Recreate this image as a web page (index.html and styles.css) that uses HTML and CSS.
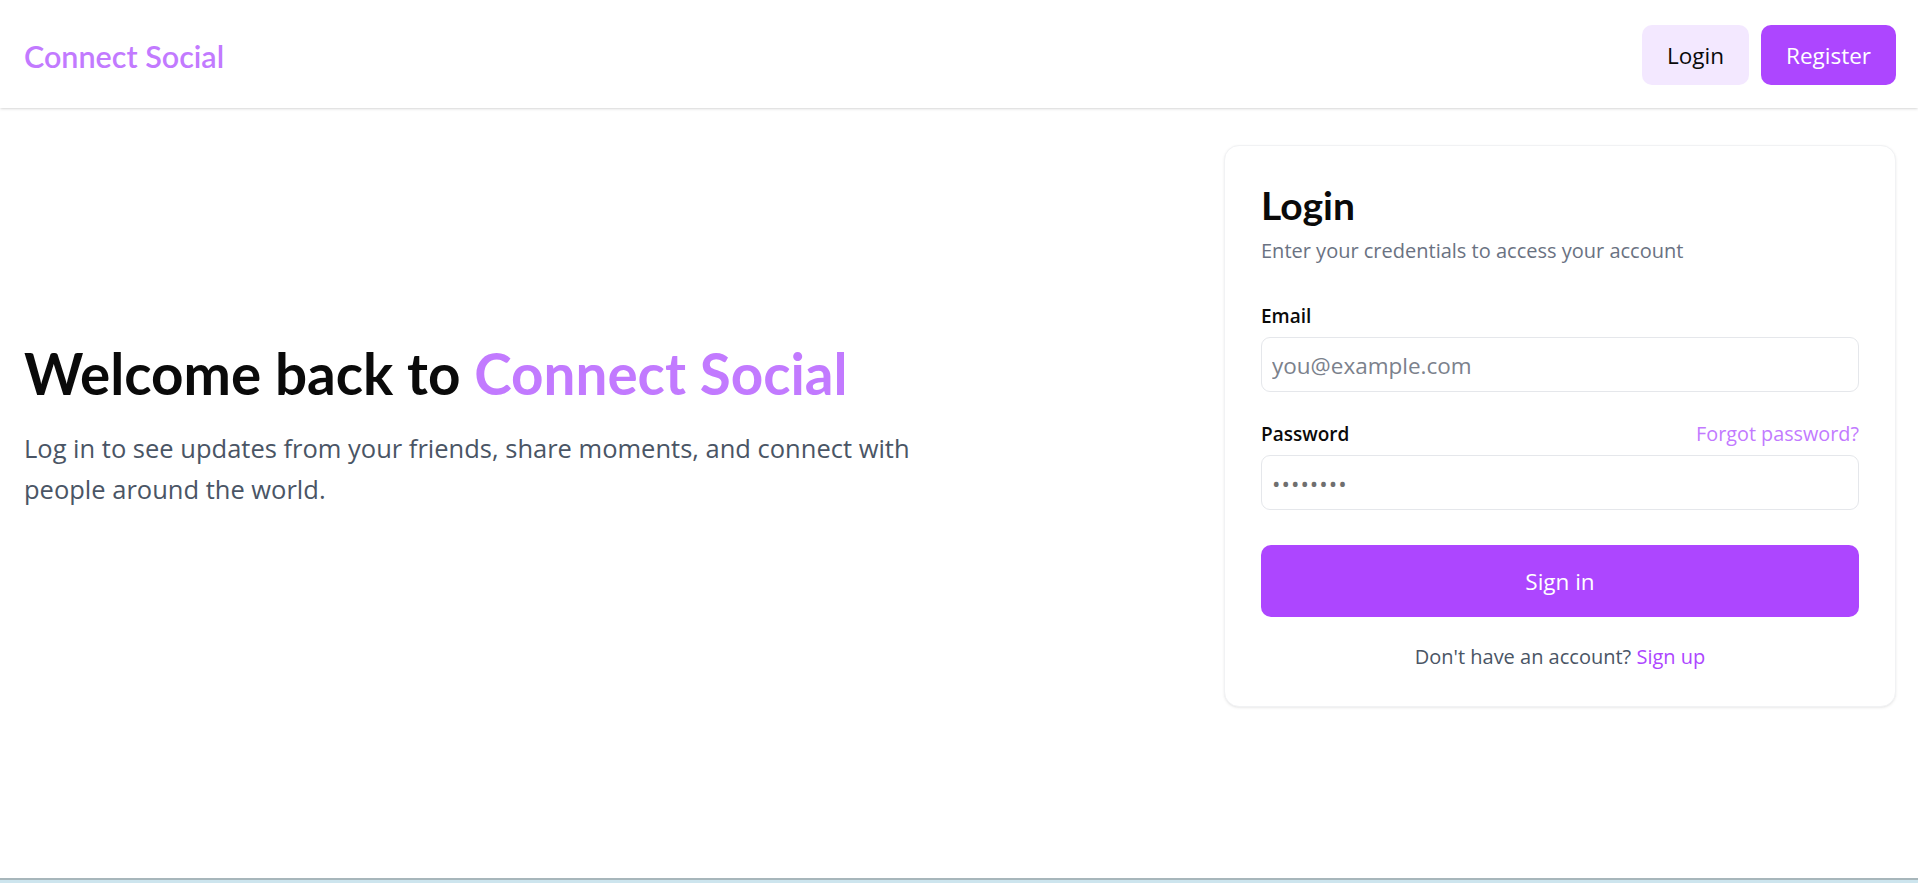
FILE: index.html
```html
<!DOCTYPE html>
<html lang="en">
<head>
<meta charset="utf-8">
<title>Connect Social – Login</title>
<link rel="stylesheet" href="styles.css">
</head>
<body>
<div class="page">
  <header class="topbar">
    <a class="brand" href="#">Connect Social</a>
    <nav class="actions">
      <a class="btn btn-soft" href="#">Login</a>
      <a class="btn btn-primary" href="#">Register</a>
    </nav>
  </header>

  <main class="main">
    <section class="hero">
      <h1 class="hero-title">Welcome back to <span class="accent">Connect Social</span></h1>
      <p class="hero-text">Log in to see updates from your friends, share moments, and connect with people around the world.</p>
    </section>

    <section class="card">
      <h2 class="card-title">Login</h2>
      <p class="card-subtitle">Enter your credentials to access your account</p>

      <form class="form">
        <div class="field">
          <div class="field-head">
            <label class="label" for="email">Email</label>
          </div>
          <input class="input" id="email" type="email" placeholder="you@example.com">
        </div>
        <div class="field field-password">
          <div class="field-head">
            <label class="label" for="password">Password</label>
            <a class="forgot" href="#">Forgot password?</a>
          </div>
          <input class="input" id="password" type="password" placeholder="••••••••">
        </div>
        <button class="submit" type="button">Sign in</button>
      </form>

      <p class="signup">Don't have an account? <a class="signup-link" href="#">Sign up</a></p>
    </section>
  </main>

  <div class="screen-edge"></div>
</div>
</body>
</html>
```

FILE: styles.css
```css
* { box-sizing: border-box; }

html, body {
  margin: 0;
  padding: 0;
  background: #ffffff;
}

body {
  font-family: "Open Sans", "Noto Sans", sans-serif;
  color: #0a0a0a;
}

a { text-decoration: none; }

.page {
  min-height: 100vh;
  display: flex;
  flex-direction: column;
}

/* Header */
.topbar {
  height: 108px;
  padding: 2px 22px 0 24px;
  display: flex;
  align-items: center;
  justify-content: space-between;
  background: #ffffff;
  box-shadow: 0 1px 3px rgba(0, 0, 0, 0.13), 0 1px 2px -1px rgba(0, 0, 0, 0.1);
  position: relative;
  z-index: 1;
}

.brand {
  font-family: "Lato", "Open Sans", sans-serif;
  font-weight: 600;
  font-size: 30.5px;
  color: #c27aff;
  padding-top: 2px;
}

.actions {
  display: flex;
  gap: 12px;
}

.btn {
  height: 60px;
  padding: 0 25px;
  display: flex;
  align-items: center;
  justify-content: center;
  border-radius: 10px;
  font-size: 22.5px;
}

.btn-soft {
  background: #f3e8ff;
  color: #0a0a0a;
}

.btn-primary {
  background: #ad46ff;
  color: #ffffff;
}

/* Main */
.main {
  display: flex;
  align-items: center;
  padding: 37px 22px 0 24px;
}

.hero {
  flex: 1;
}

.hero-title {
  margin: 0 0 25px;
  font-family: "Lato", "Open Sans", sans-serif;
  font-weight: 700;
  font-size: 56.6px;
  line-height: 60px;
  color: #0a0a0a;
}

.accent { color: #c27aff; }

.hero-text {
  margin: 0;
  max-width: 930px;
  font-size: 25.5px;
  line-height: 41px;
  color: #4a5565;
}

/* Card */
.card {
  flex: none;
  width: 672px;
  padding: 37px 36px 35px;
  border: 1px solid #f1f2f4;
  border-radius: 15px;
  background: #ffffff;
  box-shadow: 0 1px 3px rgba(0, 0, 0, 0.08), 0 1px 2px -1px rgba(0, 0, 0, 0.05);
}

.card-title {
  margin: 0;
  font-family: "Lato", "Open Sans", sans-serif;
  font-weight: 700;
  font-size: 39px;
  line-height: 45px;
}

.card-subtitle {
  margin: 9px 0 0;
  font-size: 20px;
  line-height: 28px;
  color: #6a7282;
}

.form {
  margin-top: 37px;
  display: flex;
  flex-direction: column;
}

.field-password {
  margin-top: 28px;
}

.field-head {
  height: 28px;
  margin-bottom: 7px;
  display: flex;
  align-items: center;
  justify-content: space-between;
}

.label {
  font-size: 19px;
  font-weight: 600;
  line-height: 28px;
  color: #0a0a0a;
}

.forgot {
  font-size: 19.8px;
  line-height: 28px;
  color: #c27aff;
}

.input {
  display: block;
  width: 100%;
  height: 55px;
  padding: 2px 10px 0;
  border: 1px solid #e5e7eb;
  border-radius: 9px;
  background: #ffffff;
  font-family: "Open Sans", "Noto Sans", sans-serif;
  font-size: 22.5px;
  color: #0a0a0a;
  outline: none;
}

.input::placeholder {
  color: #7b818c;
}

#password::placeholder {
  color: #6f6f6f;
  letter-spacing: 1px;
}

.submit {
  margin-top: 35px;
  height: 72px;
  border: none;
  border-radius: 10px;
  background: #ad46ff;
  color: #ffffff;
  font-family: "Open Sans", "Noto Sans", sans-serif;
  font-size: 22.5px;
  cursor: pointer;
}

.signup {
  margin: 26px 0 0;
  text-align: center;
  font-size: 20px;
  line-height: 28px;
  color: #4a5565;
}

.signup-link { color: #ad46ff; }

/* Bottom screen edge */
.screen-edge {
  margin-top: auto;
  height: 5px;
  border-top: 2px solid #a7b6bb;
  background: #cde5ee;
}
```
